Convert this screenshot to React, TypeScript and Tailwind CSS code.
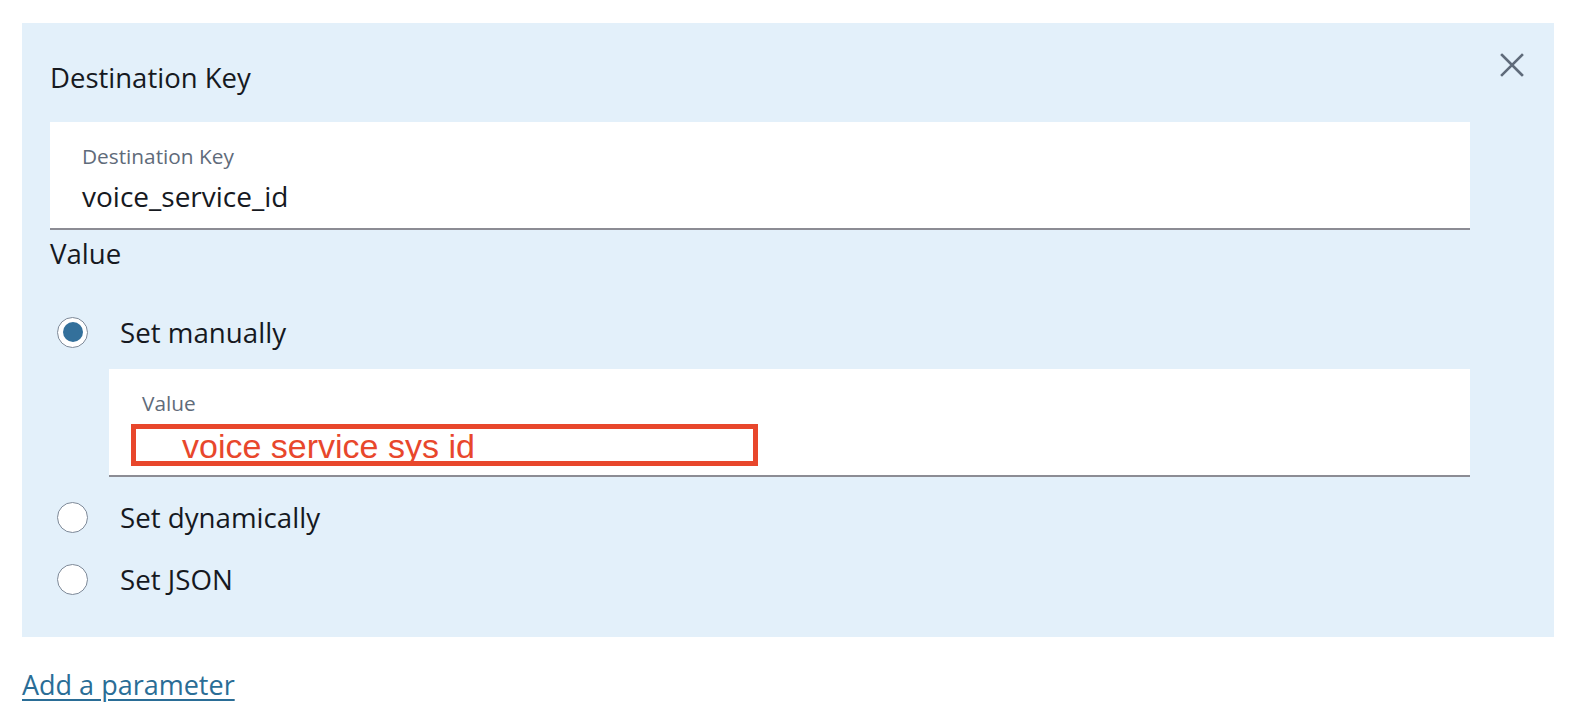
import React from "react";

function Radio({ checked }: { checked?: boolean }) {
  return (
    <span className="flex h-[31px] w-[31px] shrink-0 items-center justify-center rounded-full border border-[#7d8998] bg-white">
      {checked ? <span className="h-[20px] w-[20px] rounded-full bg-[#33709b]" /> : null}
    </span>
  );
}

function RadioRow({ label, checked }: { label: string; checked?: boolean }) {
  return (
    <div className="flex h-[32px] items-center pl-[7px]">
      <Radio checked={checked} />
      <span className="ml-[32px] text-[27.7px] leading-[32px] text-[#16191f]">{label}</span>
    </div>
  );
}

export default function App() {
  return (
    <div
      className="min-h-[720px] w-full bg-white pl-[22px] pt-[23px]"
      style={{ fontFamily: '"Open Sans", "Noto Sans", sans-serif' }}
    >
      <div className="flex h-[614px] w-[1532px] bg-[#e3f0fa] pl-[28px] pr-[30px]">
        <div className="flex w-[1420px] flex-col pt-[39px]">
          <h2 className="text-[27.5px] leading-[32px] text-[#16191f]">Destination Key</h2>
          <div className="mt-[28px] flex h-[108px] flex-col border-b-2 border-[#8c8c94] bg-white pl-[32px] pt-[22px]">
            <span className="text-[20.8px] leading-[24px] text-[#5f6b7a]">Destination Key</span>
            <span className="mt-[12px] text-[28px] leading-[32px] text-[#16191f]">voice_service_id</span>
          </div>
          <div className="mt-[7px] text-[27.6px] leading-[32px] text-[#16191f]">Value</div>
          <div className="mt-[47px]">
            <RadioRow label="Set manually" checked />
          </div>
          <div className="relative ml-[59px] mt-[21px] flex h-[108px] flex-col border-b-2 border-[#8c8c94] bg-white pl-[33px] pt-[22px]">
            <span className="text-[20.8px] leading-[24px] text-[#5f6b7a]">Value</span>
            <div className="absolute left-[22px] top-[55px] h-[42px] w-[627px] border-[5px] border-[#e8472c]">
              <span
                className="absolute left-[46px] top-[-3px] whitespace-nowrap text-[34px] leading-[40px] text-[#e8472c]"
                style={{ fontFamily: '"Liberation Sans", Arial, sans-serif' }}
              >
                voice service sys id
              </span>
            </div>
          </div>
          <div className="mt-[24px]">
            <RadioRow label="Set dynamically" />
          </div>
          <div className="mt-[30px]">
            <RadioRow label="Set JSON" />
          </div>
        </div>
        <div className="ml-[30px] pt-[30px]">
          <button className="flex h-[24px] w-[24px] items-center justify-center text-[#5f6b7a]" aria-label="Close">
            <svg width="24" height="24" viewBox="0 0 24 24" fill="none" stroke="currentColor" strokeWidth="2.6" strokeLinecap="square">
              <path d="M2 2 L22 22 M22 2 L2 22" />
            </svg>
          </button>
        </div>
      </div>
      <div className="mt-[32px]">
        <a href="#" className="text-[27px] leading-[32px] text-[#2a6d96] underline decoration-2 underline-offset-[4px]">
          Add a parameter
        </a>
      </div>
    </div>
  );
}
